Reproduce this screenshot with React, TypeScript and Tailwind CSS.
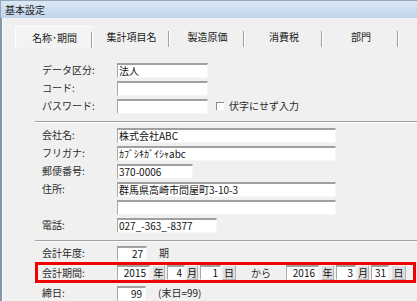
import React from "react";

const inputBase =
  "h-[15px] bg-white border-t-2 border-l border-r border-b border-t-[#a0a0a0] border-l-[#a8a8a8] border-r-[#f6f6f6] border-b-[#f6f6f6] flex items-center text-[10px] leading-none text-[#111] whitespace-nowrap overflow-hidden";

function Label({ children }: { children: React.ReactNode }) {
  return <div className="w-[75px] shrink-0 text-[10px] leading-none text-[#2a2a2a]">{children}</div>;
}

function Unit({ children, w }: { children: React.ReactNode; w: string }) {
  return (
    <div
      className={`${w} h-[15px] shrink-0 bg-[#dedede] border border-t-[#f4f4f4] border-l-[#f4f4f4] border-r-[#b4b4b4] border-b-[#b4b4b4] flex items-center justify-center text-[10px] leading-none text-[#111]`}
    >
      {children}
    </div>
  );
}

function Sep() {
  return (
    <div className="ml-[32px] flex flex-col">
      <div className="h-px bg-[#a0a0a0]" />
      <div className="h-px bg-white" />
    </div>
  );
}

function Row({ label, children }: { label: string; children?: React.ReactNode }) {
  return (
    <div className="h-[18px] pl-[39px] flex items-center">
      <Label>{label}</Label>
      {children}
    </div>
  );
}

export default function App() {
  const tabs = [
    { t: "名称･期間", w: "w-[78px]" },
    { t: "集計項目名", w: "w-[77px]" },
    { t: "製造原価", w: "w-[75px]" },
    { t: "消費税", w: "w-[78px]" },
    { t: "部門", w: "w-[76px]" },
  ];
  return (
    <div className="w-[417px] h-[301px] overflow-hidden bg-[#f0f0f0] font-['Noto_Sans_CJK_JP',sans-serif] flex flex-col">
      <div className="h-[18px] shrink-0 bg-gradient-to-b from-[#dbe7f4] to-[#c0d4ea] border-t border-l border-[#98a9bd] flex items-center pl-[4px] text-[10px] leading-none text-[#1c1c1c]">
        基本設定
      </div>
      <div className="flex flex-1">
        <div className="w-[3px] shrink-0 flex">
          <div className="w-[2px] bg-[#8797aa]" />
          <div className="w-px bg-[#fbfbfb]" />
        </div>
        <div className="flex-1 flex flex-col">
          <div className="mt-[8px] ml-[12px] h-[22px] flex">
            {tabs.map((tab, i) => (
              <div
                key={tab.t}
                className={`${tab.w} shrink-0 relative flex items-center justify-center text-[10px] leading-none text-[#1a1a1a] ${
                  i === 0 ? "border-l border-t border-white bg-[#f3f3f3]" : ""
                }`}
              >
                {tab.t}
                <div className="absolute right-0 top-[5px] h-[16px] w-[2px] flex">
                  <div className="w-px bg-[#a0a0a0]" />
                  <div className="w-px bg-white" />
                </div>
              </div>
            ))}
          </div>

          <div className="mt-[13px]" />
          <Row label="データ区分:">
            <div className={`${inputBase} w-[91px] pl-[1px] border-b-[#a0a0a0] border-r-[#a0a0a0] border-t border-t-[#8c8c8c]`}>法人</div>
          </Row>
          <Row label="コード:">
            <div className={`${inputBase} w-[91px]`} />
          </Row>
          <Row label="パスワード:">
            <div className={`${inputBase} w-[91px]`} />
            <div className="ml-[8px] w-[8px] h-[8px] bg-white border-t border-l border-[#8a8a8a]" />
            <div className="ml-[5px] text-[10px] leading-none text-[#2a2a2a]">伏字にせず入力</div>
          </Row>

          <div className="mt-[6px]" />
          <Sep />
          <div className="mt-[3px]" />
          <Row label="会社名:">
            <div className={`${inputBase} w-[219px] pl-[1px]`}>株式会社ABC</div>
          </Row>
          <Row label="フリガナ:">
            <div className={`${inputBase} w-[219px] pl-[1px]`}>ｶﾌﾞｼｷｶﾞｲｼｬabc</div>
          </Row>
          <Row label="郵便番号:">
            <div className={`${inputBase} w-[76px] pl-[1px]`}>370-0006</div>
          </Row>
          <Row label="住所:">
            <div className={`${inputBase} w-[219px] pl-[1px]`}>群馬県高崎市問屋町3-10-3</div>
          </Row>
          <Row label="">
            <div className={`${inputBase} w-[219px]`} />
          </Row>
          <Row label="電話:">
            <div className={`${inputBase} w-[100px] pl-[1px]`}>027_-363_-8377</div>
          </Row>

          <div className="mt-[6px]" />
          <Sep />
          <div className="mt-[2px]" />
          <Row label="会計年度:">
            <div className={`${inputBase} w-[30px] justify-end pr-[3px]`}>27</div>
            <div className="ml-[12px] text-[10px] leading-none text-[#2a2a2a]">期</div>
          </Row>

          <div className="ml-[32px] w-[381px] h-[21px] border-[3px] border-[#f00000] flex items-center pl-[4px]">
            <Label>会計期間:</Label>
            <div className={`${inputBase} w-[33px] justify-end pr-[3px]`}>2015</div>
            <div className="ml-[2px]" />
            <Unit w="w-[13px]">年</Unit>
            <div className={`${inputBase} ml-[2px] w-[18px] justify-end pr-[2px]`}>4</div>
            <div className="ml-[1px]" />
            <Unit w="w-[12px]">月</Unit>
            <div className={`${inputBase} ml-[2px] w-[21px] justify-end pr-[2px]`}>1</div>
            <div className="ml-[1px]" />
            <Unit w="w-[14px]">日</Unit>
            <div className="ml-[15px] w-[35px] shrink-0 text-[10px] leading-none text-[#2a2a2a]">から</div>
            <div className={`${inputBase} w-[33px] justify-end pr-[3px]`}>2016</div>
            <div className="ml-[2px]" />
            <Unit w="w-[13px]">年</Unit>
            <div className={`${inputBase} ml-[2px] w-[20px] justify-end pr-[2px]`}>3</div>
            <div className="ml-[1px]" />
            <Unit w="w-[12px]">月</Unit>
            <div className={`${inputBase} ml-[2px] w-[18px] justify-end pr-[2px]`}>31</div>
            <div className="ml-[2px]" />
            <Unit w="w-[15px]">日</Unit>
          </div>

          <div className="mt-[1px]" />
          <Row label="締日:">
            <div className={`${inputBase} w-[29px] justify-end pr-[3px]`}>99</div>
            <div className="ml-[12px] text-[10px] leading-none text-[#2a2a2a]">(末日=99)</div>
          </Row>
        </div>
      </div>
    </div>
  );
}
